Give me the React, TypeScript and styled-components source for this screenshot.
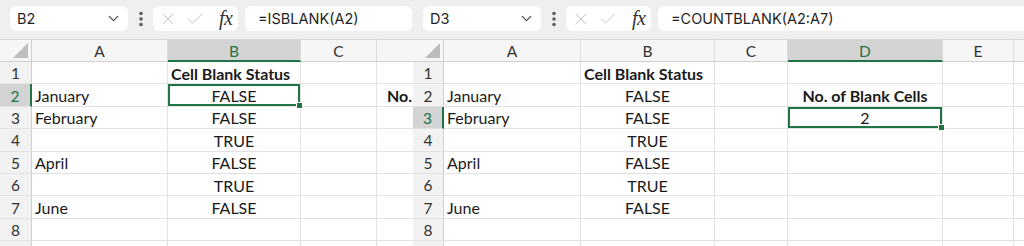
import React from 'react'
import styled, { createGlobalStyle } from 'styled-components'
import { ChevronDown, X, Check } from 'lucide-react'

const GREEN = '#217346'

const GlobalStyle = createGlobalStyle`
  html, body {
    margin: 0;
    padding: 0;
    background: #ffffff;
  }
  body {
    width: 1024px;
    height: 246px;
    overflow: hidden;
  }
`

const Page = styled.div`
  display: flex;
  width: 1024px;
  height: 246px;
  overflow: hidden;
`

const Panel = styled.div<{ $width: number }>`
  flex: none;
  width: ${({ $width }) => $width}px;
  display: flex;
  flex-direction: column;
  overflow: hidden;
`

const Toolbar = styled.div`
  height: 39px;
  flex: none;
  box-sizing: border-box;
  background: #efefef;
  display: flex;
  align-items: flex-start;
  padding: 6px 1px 0 10px;
  font-family: Inter, 'Liberation Sans', sans-serif;
`

const NameBox = styled.div`
  width: 118px;
  height: 25px;
  flex: none;
  box-sizing: border-box;
  background: #ffffff;
  border-radius: 6px;
  display: flex;
  align-items: center;
  justify-content: space-between;
  padding: 0 6px 0 7px;
  font-size: 14.5px;
  color: #1f1f1f;
  svg {
    color: #4a4a4a;
  }
`

const Dots = styled.div`
  width: 25px;
  height: 25px;
  flex: none;
  display: flex;
  align-items: center;
  justify-content: center;
`

const FxGroup = styled.div`
  width: 85px;
  height: 25px;
  flex: none;
  box-sizing: border-box;
  background: #ffffff;
  border-radius: 6px;
  display: flex;
  align-items: center;
  gap: 7px;
  padding: 0 0 0 5px;
  svg {
    color: #bdbdbd;
  }
`

const Fx = styled.span`
  font-family: 'Liberation Serif', serif;
  font-style: italic;
  font-size: 20px;
  line-height: 1;
  color: #333333;
  margin-left: 7px;
  margin-top: -2px;
  letter-spacing: -0.5px;
`

const FormulaBox = styled.div<{ $bleed?: boolean }>`
  flex: 1;
  height: 25px;
  box-sizing: border-box;
  background: #ffffff;
  border-radius: 6px;
  margin-left: 7px;
  margin-right: ${({ $bleed }) => ($bleed ? '-20px' : '0')};
  display: flex;
  align-items: center;
  padding-left: 13px;
  font-size: 14.5px;
  color: #1f1f1f;
  white-space: nowrap;
`

const Sheet = styled.div<{ $cols: string }>`
  display: grid;
  grid-template-columns: ${({ $cols }) => $cols};
  grid-template-rows: 23px;
  grid-auto-rows: 22.4px;
  font-family: Lato, 'Liberation Sans', sans-serif;
  background: #ffffff;
`

const Corner = styled.div`
  box-sizing: border-box;
  background: #f6f6f6;
  border-top: 1px solid #d8d8d8;
  border-right: 1px solid #cfcfcf;
  border-bottom: 1px solid #cfcfcf;
  display: flex;
  align-items: flex-end;
  justify-content: flex-end;
  padding: 0 3px 3px 0;
`

const ColHeader = styled.div<{ $active?: boolean }>`
  box-sizing: border-box;
  background: ${({ $active }) => ($active ? '#d3d3d3' : '#f6f6f6')};
  border-top: 1px solid #d8d8d8;
  border-right: 1px solid #dcdcdc;
  border-bottom: ${({ $active }) => ($active ? `2px solid ${GREEN}` : '1px solid #cfcfcf')};
  color: ${({ $active }) => ($active ? GREEN : '#333333')};
  display: flex;
  align-items: center;
  justify-content: center;
  font-size: 15.5px;
  padding-top: 1px;
`

const RowHeader = styled.div<{ $active?: boolean }>`
  box-sizing: border-box;
  background: ${({ $active }) => ($active ? '#d3d3d3' : '#f2f2f2')};
  border-bottom: 1px solid #e3e3e3;
  border-right: ${({ $active }) => ($active ? `2px solid ${GREEN}` : '1px solid #cfcfcf')};
  color: ${({ $active }) => ($active ? GREEN : '#333333')};
  display: flex;
  align-items: center;
  justify-content: center;
  font-size: 15.5px;
  padding-top: 1px;
`

const Cell = styled.div<{ $align?: 'left' | 'center'; $bold?: boolean; $selected?: boolean }>`
  position: relative;
  box-sizing: border-box;
  border-right: 1px solid #e2e2e2;
  border-bottom: 1px solid #e2e2e2;
  display: flex;
  align-items: center;
  justify-content: ${({ $align }) => ($align === 'center' ? 'center' : 'flex-start')};
  padding: 1px 3px 0;
  font-size: 16px;
  font-weight: ${({ $bold }) => ($bold ? 700 : 400)};
  color: #1a1a1a;
  white-space: nowrap;
  overflow: visible;
  ${({ $selected }) =>
    $selected &&
    `
    box-shadow: inset 0 0 0 2px ${GREEN};
    &::after {
      content: '';
      position: absolute;
      right: -3px;
      bottom: -3px;
      width: 5px;
      height: 5px;
      background: ${GREEN};
      border: 1px solid #ffffff;
      z-index: 2;
    }
  `}
`

type Align = 'left' | 'center'

interface CellData {
  text?: string
  bold?: boolean
  align?: Align
}

const months = ['January', 'February', '', 'April', '', 'June', '', '']
const status = ['FALSE', 'FALSE', 'TRUE', 'FALSE', 'TRUE', 'FALSE', '', '']

const buildRows = (): CellData[][] => {
  const rows: CellData[][] = []
  rows.push([{}, { text: 'Cell Blank Status', bold: true }, {}, {}, {}, {}])
  for (let i = 0; i < 8; i++) {
    const d: CellData =
      i === 0
        ? { text: 'No. of Blank Cells', bold: true, align: 'center' }
        : i === 1
          ? { text: '2', align: 'center' }
          : {}
    rows.push([
      { text: months[i] },
      { text: status[i], align: 'center' },
      {},
      d,
      {},
      {},
    ])
  }
  return rows
}

const rows = buildRows()
const letters = ['A', 'B', 'C', 'D', 'E', 'F']

const CornerTriangle = () => (
  <svg width="15" height="15" viewBox="0 0 15 15">
    <polygon points="15,0 15,15 0,15" fill="#bdbdbd" />
  </svg>
)

const VerticalDots = () => (
  <svg width="6" height="16" viewBox="0 0 6 16">
    <circle cx="3" cy="2.5" r="1.8" fill="#5f5f5f" />
    <circle cx="3" cy="8" r="1.8" fill="#5f5f5f" />
    <circle cx="3" cy="13.5" r="1.8" fill="#5f5f5f" />
  </svg>
)

interface SpreadsheetProps {
  width: number
  cols: string
  nameRef: string
  formula: string
  activeCol: number
  activeRow: number
  bleed?: boolean
}

const Spreadsheet: React.FC<SpreadsheetProps> = ({ width, cols, nameRef, formula, activeCol, activeRow, bleed }) => (
  <Panel $width={width}>
    <Toolbar>
      <NameBox>
        <span>{nameRef}</span>
        <ChevronDown size={17} strokeWidth={1.7} />
      </NameBox>
      <Dots>
        <VerticalDots />
      </Dots>
      <FxGroup>
        <X size={20} strokeWidth={1.1} />
        <Check size={20} strokeWidth={1.1} />
        <Fx>fx</Fx>
      </FxGroup>
      <FormulaBox $bleed={bleed}>{formula}</FormulaBox>
    </Toolbar>
    <Sheet $cols={cols}>
      <Corner>
        <CornerTriangle />
      </Corner>
      {letters.map((l, i) => (
        <ColHeader key={l} $active={i === activeCol}>
          {l}
        </ColHeader>
      ))}
      {rows.concat([[{}, {}, {}, {}, {}, {}]]).map((row, r) => (
        <React.Fragment key={r}>
          <RowHeader $active={r + 1 === activeRow}>{r + 1}</RowHeader>
          {row.map((c, ci) => (
            <Cell
              key={ci}
              $align={c.align}
              $bold={c.bold}
              $selected={r + 1 === activeRow && ci === activeCol}
            >
              {c.text}
            </Cell>
          ))}
        </React.Fragment>
      ))}
    </Sheet>
  </Panel>
)

const App: React.FC = () => (
  <>
    <GlobalStyle />
    <Page>
      <Spreadsheet
        width={413}
        cols="32px 136px 133px 76px 146px 71px 80px"
        nameRef="B2"
        formula="=ISBLANK(A2)"
        activeCol={1}
        activeRow={2}
      />
      <Spreadsheet
        width={611}
        cols="31px 137px 134px 73px 155px 71px 80px"
        nameRef="D3"
        formula="=COUNTBLANK(A2:A7)"
        activeCol={3}
        activeRow={3}
        bleed
      />
    </Page>
  </>
)

export default App
